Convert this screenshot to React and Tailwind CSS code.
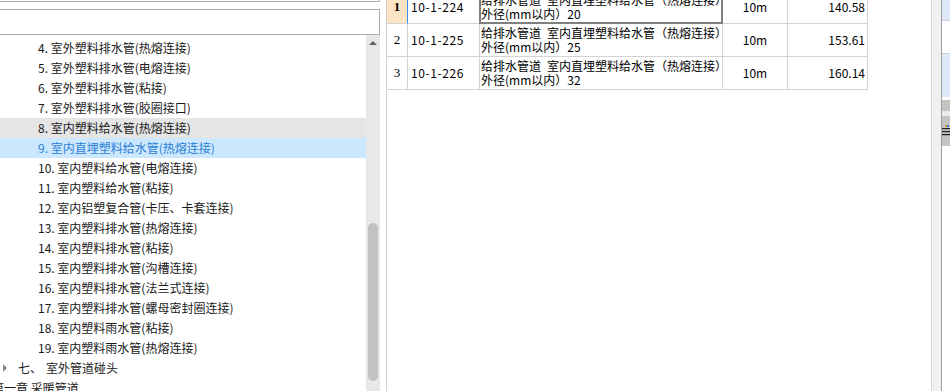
import React from "react";

const treeItems = [
  "4. 室外塑料排水管(热熔连接)",
  "5. 室外塑料排水管(电熔连接)",
  "6. 室外塑料排水管(粘接)",
  "7. 室外塑料排水管(胶圈接口)",
  "8. 室内塑料给水管(热熔连接)",
  "9. 室内直埋塑料给水管(热熔连接)",
  "10. 室内塑料给水管(电熔连接)",
  "11. 室内塑料给水管(粘接)",
  "12. 室内铝塑复合管(卡压、卡套连接)",
  "13. 室内塑料排水管(热熔连接)",
  "14. 室内塑料排水管(粘接)",
  "15. 室内塑料排水管(沟槽连接)",
  "16. 室内塑料排水管(法兰式连接)",
  "17. 室内塑料排水管(螺母密封圈连接)",
  "18. 室内塑料雨水管(粘接)",
  "19. 室内塑料雨水管(热熔连接)",
];

const rows = [
  { no: "1", code: "10-1-224", size: "20", unit: "10m", price: "140.58" },
  { no: "2", code: "10-1-225", size: "25", unit: "10m", price: "153.61" },
  { no: "3", code: "10-1-226", size: "32", unit: "10m", price: "160.14" },
];

function TreePanel() {
  return (
    <div className="w-[380px] shrink-0 flex flex-col">
      <div className="h-[2px] border-r border-b border-[#adadad]" />
      <div className="h-[7px]" />
      <div className="h-[26px] border-y border-r border-[#adadad] bg-white" />

      <div className="flex flex-1 min-h-0">
        {/* tree rows */}
        <div className="w-[366px] pt-[3px] overflow-hidden text-[12px] text-[#1a1a1a] font-['Noto_Sans_CJK_SC',sans-serif]">
          {treeItems.map((t, i) => (
            <div
              key={t}
              className={
                "h-[20px] flex items-center pl-[38px] whitespace-nowrap " +
                (i === 4 ? "bg-[#e5e5e5]" : i === 5 ? "bg-[#cce8ff] text-[#2b7fd4]" : "")
              }
            >
              {t}
            </div>
          ))}
          <div className="h-[20px] flex items-center whitespace-nowrap">
            <span className="ml-[3px] w-0 h-0 border-y-[4px] border-y-transparent border-l-[4px] border-l-[#8a8a8a]" />
            <span className="ml-[11px]">七、</span>
            <span className="ml-[4px]">室外管道碰头</span>
          </div>
          <div className="h-[20px] flex items-center whitespace-nowrap ml-[-8px]">
            第一章 采暖管道
          </div>
        </div>

        {/* scrollbar */}
        <div className="w-[14px] bg-[#e8e8e8] flex flex-col items-center">
          <div className="mt-[6px] w-0 h-0 border-x-[4px] border-x-transparent border-b-[4px] border-b-[#606060]" />
          <div className="mt-[178px] w-[10px] h-[158px] rounded-full bg-[#c2c2c2]" />
        </div>
      </div>
    </div>
  );
}

function Grid() {
  return (
    <div className="w-[545px] shrink-0 border-l border-[#d0d0d0] overflow-hidden bg-white">
      <div className="mt-[-9px]">
        {rows.map((r, i) => (
          <div key={r.no} className="flex h-[33px]">
            <div
              className={
                "w-[21px] border-r border-b border-b-[#d4d4d4] flex items-center justify-center font-['Liberation_Serif',serif] text-[13px] text-black " +
                (i === 0 ? "bg-[#fde4c4] font-bold border-r-[#3a8ee8]" : "border-r-[#d4d4d4]")
              }
            >
              {r.no}
            </div>
            <div className="w-[72px] border-r border-b border-[#d4d4d4] flex items-center pl-[3px] text-[12px] tracking-[0.6px] font-['Noto_Sans_CJK_SC',sans-serif] text-black">
              {r.code}
            </div>
            <div className="relative w-[243px] border-r border-b border-[#d4d4d4] pl-[1px] pt-[2px] text-[12px] leading-[14px] font-['Noto_Sans_CJK_SC',sans-serif] text-black">
              <div className="overflow-hidden whitespace-nowrap">给排水管道{"\u2002"}室内直埋塑料给水管（热熔连接）</div>
              <div className="overflow-hidden whitespace-nowrap">外径(mm以内）{r.size}</div>
              {i === 0 && (
                <div className="absolute left-[-1px] right-[-1px] top-[-1px] bottom-[-1px] border-2 border-[#7f7f7f]" />
              )}
            </div>
            <div className="w-[65px] border-r border-b border-[#d4d4d4] flex items-center justify-center text-[12px] font-['Noto_Sans_CJK_SC',sans-serif] text-black">
              {r.unit}
            </div>
            <div className="w-[80px] border-r border-b border-[#d4d4d4] flex items-center justify-end pr-[2px] text-[12px] font-['Noto_Sans_CJK_SC',sans-serif] text-black">
              {r.price}
            </div>
          </div>
        ))}
      </div>
    </div>
  );
}

function SideStrip() {
  return (
    <>
      <div className="w-[11px] shrink-0 border-l border-r border-l-[#d9d9d9] border-r-[#a0a0a0] bg-[#f0f0f0]" />
      <div className="w-[8px] shrink-0 flex flex-col overflow-hidden">
        <div className="h-[20px] bg-[#dde8fa]" />
        <div className="h-px bg-[#c6cdd8]" />
        <div className="h-[32px] bg-white" />
        <div className="h-px bg-[#c6cdd8]" />
        <div className="h-[43px] bg-[#dde8fa]" />
        <div className="h-[3px] bg-white" />
        <div className="h-[11px] bg-[#c4c4c4]" />
        <div className="h-[5px] bg-[#ececec]" />
        <div className="h-[30px] bg-[#c4c4c4] flex items-center">
          <svg width="12" height="12" viewBox="0 0 12 12" className="shrink-0">
            <rect x="3" y="0" width="2" height="2" fill="#e0a020" />
            <rect x="5" y="0" width="2" height="2" fill="#3070d0" />
            <rect x="0" y="3" width="12" height="1.2" fill="#202020" />
            <rect x="0" y="6" width="12" height="1.2" fill="#202020" />
            <rect x="0" y="9" width="12" height="1.2" fill="#202020" />
          </svg>
        </div>
      </div>
    </>
  );
}

export default function App() {
  return (
    <div className="w-[950px] h-[391px] overflow-hidden bg-white flex">
      <TreePanel />
      <div className="w-[6px] shrink-0" />
      <Grid />
      <SideStrip />
    </div>
  );
}
